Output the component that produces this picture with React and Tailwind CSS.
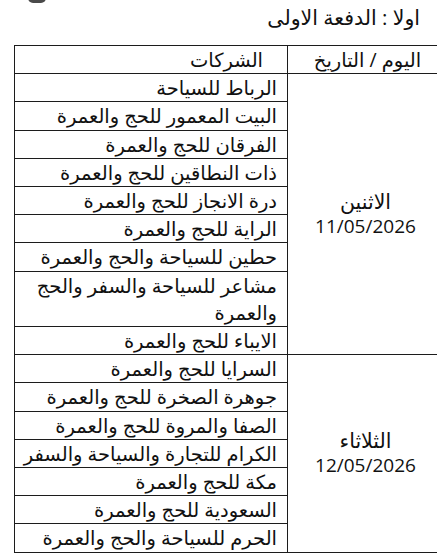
import React from "react";

const groups = [
  {
    day: "الاثنين",
    date: "11/05/2026",
    companies: [
      "الرباط للسياحة",
      "البيت المعمور للحج والعمرة",
      "الفرقان للحج والعمرة",
      "ذات النطاقين للحج والعمرة",
      "درة الانجاز للحج والعمرة",
      "الراية للحج والعمرة",
      "حطين للسياحة والحج والعمرة",
      ["مشاعر للسياحة والسفر والحج", "والعمرة"],
      "الايباء للحج والعمرة",
    ],
  },
  {
    day: "الثلاثاء",
    date: "12/05/2026",
    companies: [
      "السرايا للحج والعمرة",
      "جوهرة الصخرة للحج والعمرة",
      "الصفا والمروة للحج والعمرة",
      "الكرام للتجارة والسياحة والسفر",
      "مكة للحج والعمرة",
      "السعودية للحج والعمرة",
      "الحرم للسياحة والحج والعمرة",
    ],
  },
];

function CompanyCell({ name }) {
  return (
    <td className="border border-[#1c1c1c] pr-[10px] pl-1 text-right whitespace-nowrap">
      {Array.isArray(name) ? (
        <>
          {name[0]}
          <br />
          {name[1]}
        </>
      ) : (
        name
      )}
    </td>
  );
}

export default function App() {
  return (
    <div
      className="relative w-[437px] h-[558px] overflow-hidden bg-white text-[#111]"
      style={{ fontFamily: '"Open Sans", "DejaVu Sans", sans-serif' }}>
      <div className="absolute left-[28px] top-[-7px] w-[18px] h-[10px] rounded-full bg-[#4a4a4a]" />
      <div dir="rtl" className="pr-[17px] pt-[4px] h-[45px] text-[20.5px] leading-[27px]">
        اولا : الدفعة الاولى
      </div>
      <div className="pl-[14px]">
        <table
          dir="rtl"
          className="w-[429px] table-fixed border-collapse text-[19.5px] leading-[27.2px]">
          <colgroup>
            <col className="w-[156px]" />
            <col className="w-[273px]" />
          </colgroup>
          <thead>
            <tr>
              <th className="border border-[#1c1c1c] font-normal text-center pl-[4px]">
                اليوم / التاريخ
              </th>
              <th className="border border-[#1c1c1c] font-normal text-right pr-[24px]">
                الشركات
              </th>
            </tr>
          </thead>
          <tbody>
            {groups.map((g) =>
              g.companies.map((c, i) => (
                <tr key={g.date + i}>
                  {i === 0 && (
                    <td
                      rowSpan={g.companies.length}
                      className="border border-[#1c1c1c] text-center align-middle leading-[25px]">
                      <div className="text-[20.5px]">{g.day}</div>
                      <div className="text-[19px]">{g.date}</div>
                    </td>
                  )}
                  <CompanyCell name={c} />
                </tr>
              ))
            )}
          </tbody>
        </table>
      </div>
    </div>
  );
}
